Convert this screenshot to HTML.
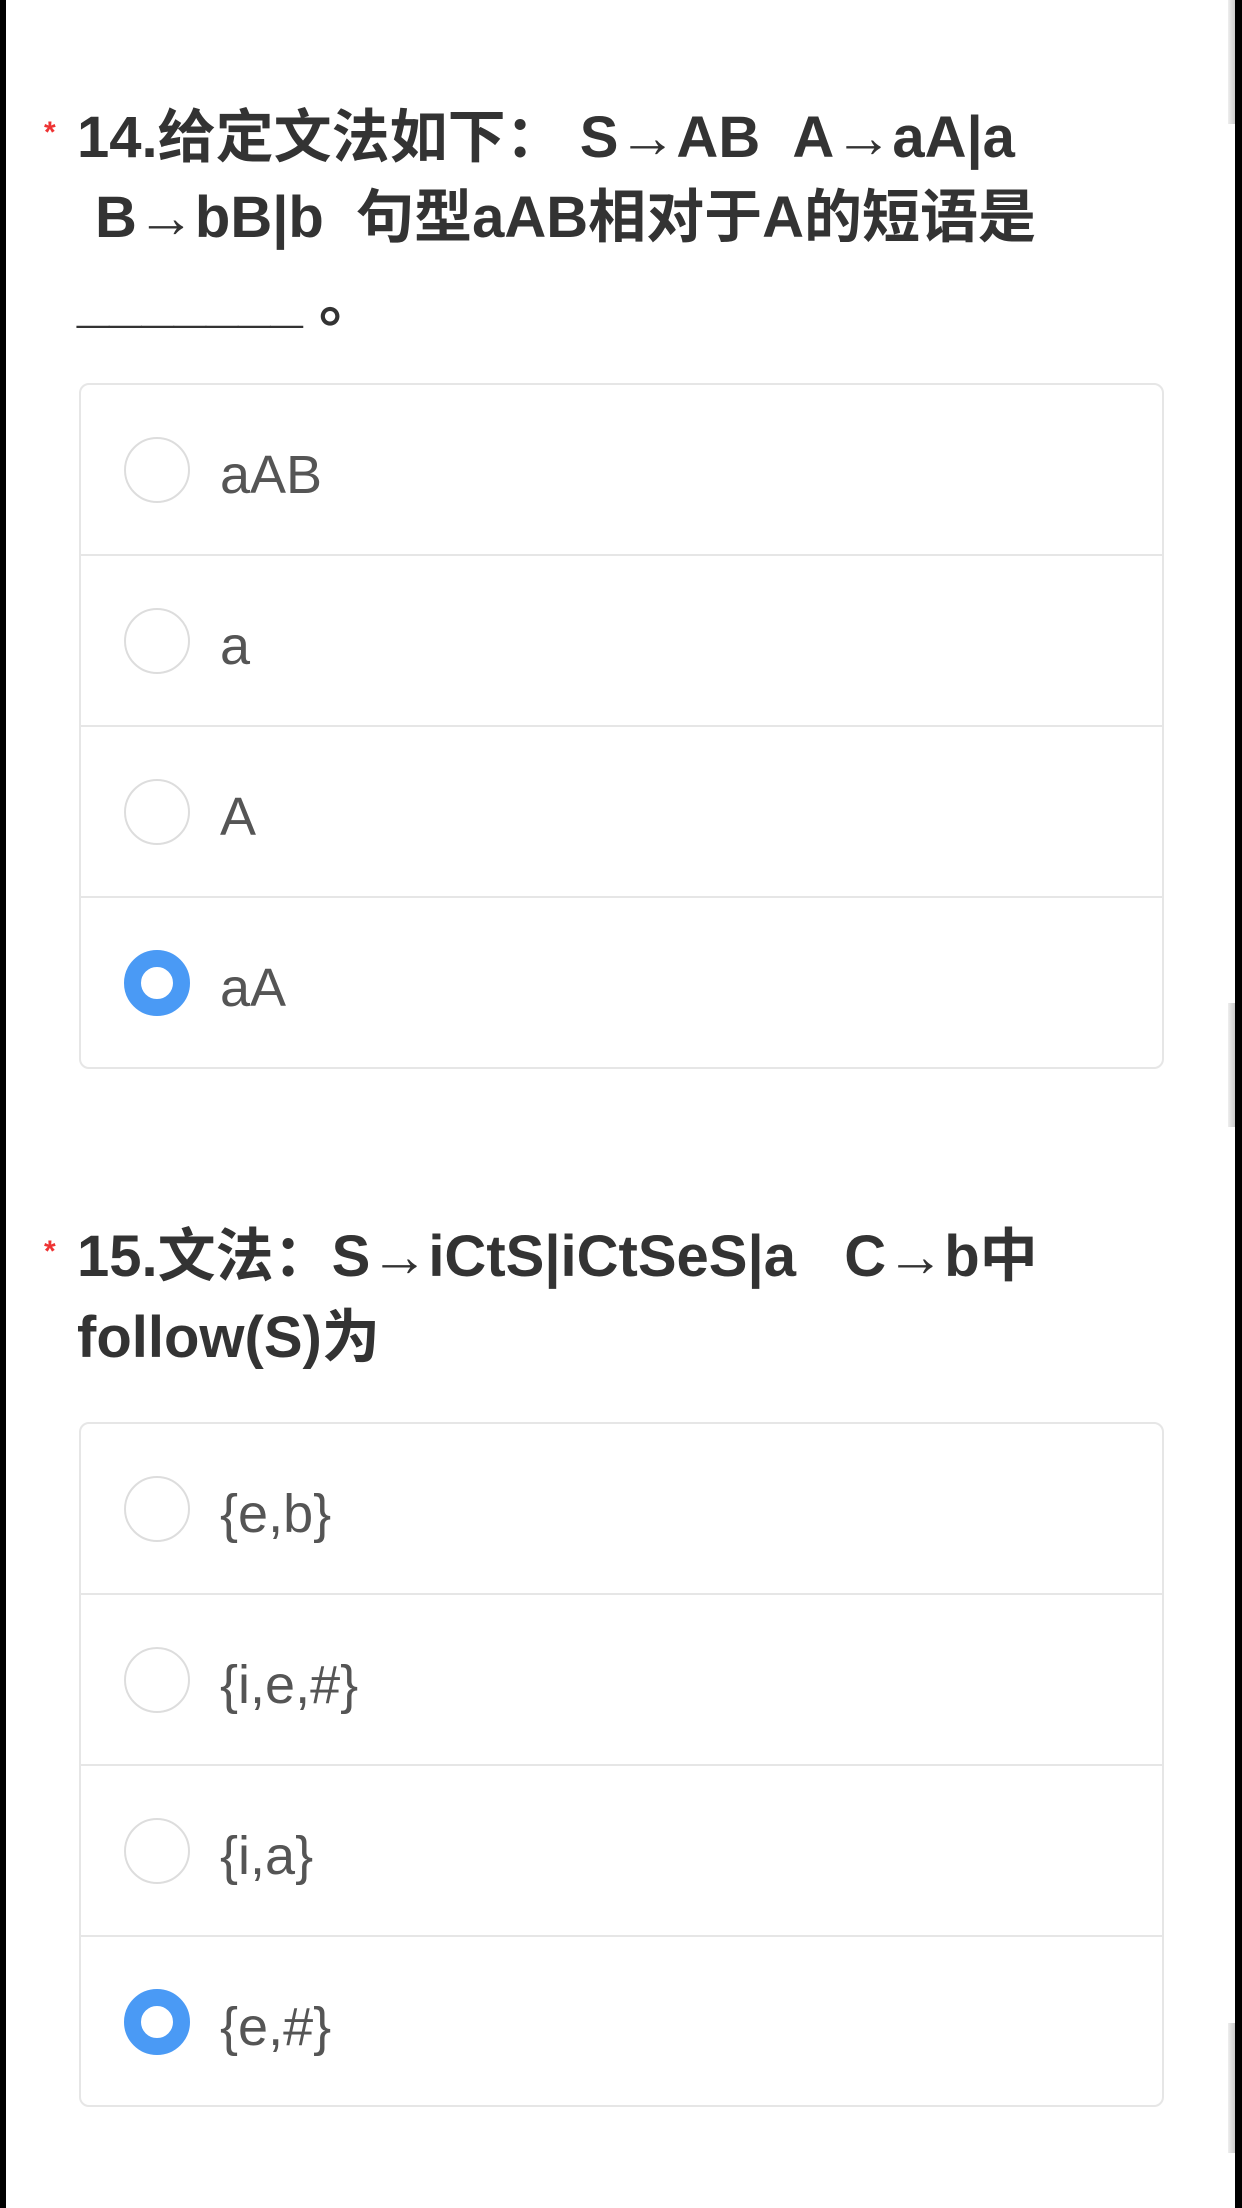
<!DOCTYPE html>
<html><head><meta charset="utf-8"><style>
*{margin:0;padding:0;box-sizing:border-box}
body{width:1242px;height:2208px;background:#fff;position:relative;overflow:hidden;font-family:"Liberation Sans","Noto Sans CJK SC",sans-serif}
.lb{position:absolute;left:0;top:0;width:6px;height:2208px;background:#000}
.rb{position:absolute;left:1235px;top:0;width:7px;height:2208px;background:#000}
.sb{position:absolute;left:1228px;width:7px;background:linear-gradient(90deg,#eee,#ccc)}
.t{position:absolute;left:77px;font-size:58px;font-weight:bold;color:#333;line-height:80px;white-space:nowrap}
.star{position:absolute;left:44px;color:#e33;font-size:30px;font-weight:bold}
.card{position:absolute;left:79px;width:1085px;border:2px solid #e6e6e6;border-radius:10px}
.row{height:171px;border-bottom:2px solid #e6e6e6;position:relative}
.row:last-child{border-bottom:none}
.r{position:absolute;left:43px;top:52px;width:66px;height:66px;border:2px solid #ddd;border-radius:50%}
.r.on{border:17px solid #4a9af5}
.l{position:absolute;left:139px;top:60px;font-size:54px;color:#555;line-height:60px}
</style></head><body>
<div class="lb"></div><div class="rb"></div>
<div class="sb" style="top:0;height:124px"></div>
<div class="sb" style="top:1003px;height:124px"></div>
<div class="sb" style="top:2023px;height:130px"></div>

<div class="star" style="top:116px">*</div>
<div class="t" style="top:98px">14.给定文法如下： S→AB &nbsp;A→aA|a</div>
<div class="t" style="top:178px;left:95px">B→bB|b &nbsp;句型aAB相对于A的短语是</div>
<div class="t" style="top:262px">_______ 。</div>
<div class="card" style="top:383px;height:686px">
<div class="row"><div class="r"></div><div class="l">aAB</div></div>
<div class="row"><div class="r"></div><div class="l">a</div></div>
<div class="row"><div class="r"></div><div class="l">A</div></div>
<div class="row"><div class="r on"></div><div class="l">aA</div></div>
</div>

<div class="star" style="top:1235px">*</div>
<div class="t" style="top:1217px">15.文法：S→iCtS|iCtSeS|a &nbsp;&nbsp;C→b中</div>
<div class="t" style="top:1298px">follow(S)为</div>
<div class="card" style="top:1422px;height:685px">
<div class="row"><div class="r"></div><div class="l">{e,b}</div></div>
<div class="row"><div class="r"></div><div class="l">{i,e,#}</div></div>
<div class="row"><div class="r"></div><div class="l">{i,a}</div></div>
<div class="row"><div class="r on"></div><div class="l">{e,#}</div></div>
</div>
</body></html>
